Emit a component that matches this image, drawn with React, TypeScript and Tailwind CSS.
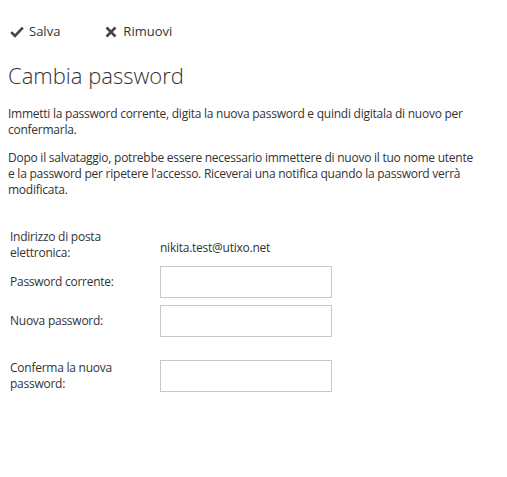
import React from "react";

function CheckIcon() {
  return (
    <svg width="14" height="12" viewBox="0 0 14 12" className="text-[#444]">
      <path d="M1.2 6.2 L5 10 L12.8 1.6" fill="none" stroke="currentColor" strokeWidth="2.6" />
    </svg>
  );
}

function CloseIcon() {
  return (
    <svg width="12" height="12" viewBox="0 0 12 12" className="text-[#444]">
      <path d="M1.5 1.5 L10.5 10.5 M10.5 1.5 L1.5 10.5" fill="none" stroke="currentColor" strokeWidth="2.6" />
    </svg>
  );
}

function Row({ label, children, className }: { label: React.ReactNode; children: React.ReactNode; className?: string }) {
  return (
    <div className={`flex items-center ${className ?? ""}`}>
      <div className="w-[152px] pl-[2px] leading-[16px]">{label}</div>
      {children}
    </div>
  );
}

function Field() {
  return <input type="password" className="h-[32px] w-[172px] border border-[#c8c8c8] bg-white outline-none" />;
}

export default function App() {
  return (
    <div
      className="h-[477px] w-[507px] bg-white px-2 text-[12px] tracking-[-0.25px] text-[#333]"
      style={{ fontFamily: '"Open Sans", sans-serif' }}
    >
      <div className="flex h-[62px] items-start pt-[22px] text-[13px] tracking-normal">
        <button className="flex items-center gap-[5px] pl-[2px]">
          <CheckIcon />
          <span>Salva</span>
        </button>
        <button className="ml-[45px] flex items-center gap-[6px]">
          <CloseIcon />
          <span>Rimuovi</span>
        </button>
      </div>

      <h1 className="text-[22px] font-light leading-[26px] tracking-normal text-[#333]">Cambia password</h1>

      <div className="w-[474px]">
        <p className="mt-[18px] leading-[16px]">
          Immetti la password corrente, digita la nuova password e quindi digitala di nuovo per confermarla.
        </p>
        <p className="mt-[12px] leading-[16px]">
          Dopo il salvataggio, potrebbe essere necessario immettere di nuovo il tuo nome utente e la password per
          ripetere l'accesso. Riceverai una notifica quando la password verrà modificata.
        </p>
      </div>

      <div className="mt-[31px] flex flex-col">
        <Row label={<>Indirizzo di posta<br />elettronica:</>}>
          <span className="pt-[6px]">nikita.test@utixo.net</span>
        </Row>
        <Row label="Password corrente:" className="mt-[5px]">
          <Field />
        </Row>
        <Row label="Nuova password:" className="mt-[7px]">
          <Field />
        </Row>
        <Row label={<>Conferma la nuova<br />password:</>} className="mt-[23px]">
          <Field />
        </Row>
      </div>
    </div>
  );
}
